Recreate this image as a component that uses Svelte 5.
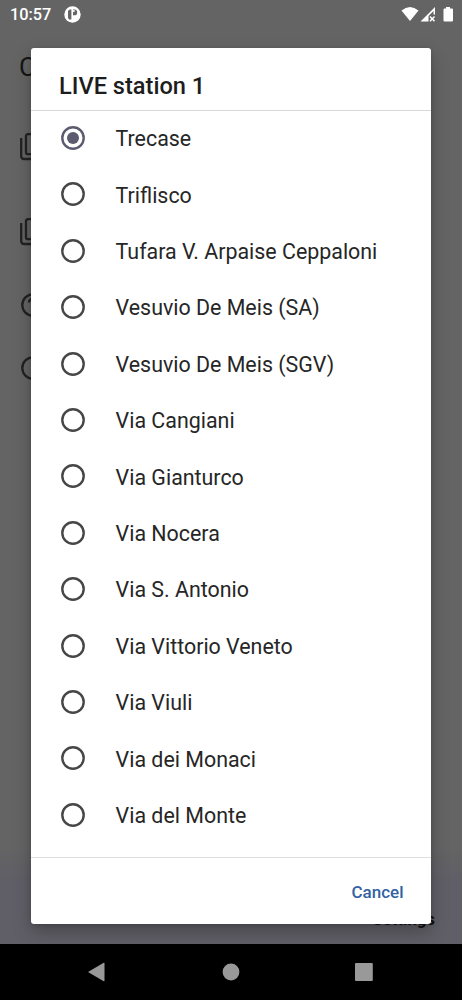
<script>
    const stations = [
        'Trecase',
        'Triflisco',
        'Tufara V. Arpaise Ceppaloni',
        'Vesuvio De Meis (SA)',
        'Vesuvio De Meis (SGV)',
        'Via Cangiani',
        'Via Gianturco',
        'Via Nocera',
        'Via S. Antonio',
        'Via Vittorio Veneto',
        'Via Viuli',
        'Via dei Monaci',
        'Via del Monte'
    ];

    let selected = $state('Trecase');
    let open = $state(true);
</script>

<div class="phone">
    <div class="screen">
        <header class="status">
            <span class="clock">10:57</span>
            <svg class="app-icon" width="17" height="17" viewBox="0 0 17 17">
                <circle cx="8.5" cy="8.5" r="8.2" fill="#fff" />
                <path d="M7.4 3.4v10.2H6.2C4.6 13.6 4 12.5 4 11V6c0-1.6.8-2.6 2.3-2.6z" fill="#646464" />
                <path d="M9 3.5h1.3a2.9 2.9 0 0 1 0 5.8H9z" fill="#646464" />
                <circle cx="9.8" cy="5" r="1" fill="#fff" />
            </svg>
            <svg class="signals" width="54" height="18" viewBox="0 0 54 18">
                <path d="M1.5 4.5Q10 -2.5 18.5 4.5L10 15z" fill="#fff" />
                <path d="M20.5 15.5L35 1v7.5h-1.5V5L28.500 10v5.5z" fill="#fff" />
                <path d="M30 10.5l4.5 4.8M34.5 10.5L30 15.3" stroke="#fff" stroke-width="1.5" />
                <path d="M46 1h4v1.5h2q1 0 1 1V14.5q0 1-1 1h-7.5q-1 0-1-1V3.5q0-1 1-1H46z" fill="#fff" />
            </svg>
        </header>

        <main class="settings">
            <h1>C</h1>
            <svg class="item copy" width="28" height="28" viewBox="0 0 28 28">
                <path d="M1.2 5v18q0 3 3 3h20M8 1.2h16q2 0 2 2v16q0 2-2 2H8q-2 0-2-2v-16q0-2 2-2z" />
            </svg>
            <svg class="item copy second" width="28" height="28" viewBox="0 0 28 28">
                <path d="M1.2 5v18q0 3 3 3h20M8 1.2h16q2 0 2 2v16q0 2-2 2H8q-2 0-2-2v-16q0-2 2-2z" />
            </svg>
            <svg class="item help" width="24" height="24" viewBox="0 0 24 24">
                <circle cx="12" cy="12" r="10.7" />
                <path d="M8 9.5Q8 6 12 6t4 3.500q0 2-4 5v2" />
            </svg>
            <svg class="item info" width="24" height="24" viewBox="0 0 24 24">
                <circle cx="12" cy="12" r="10.7" />
                <path d="M12 11v7M12 6v2" />
            </svg>
        </main>

        <nav class="tabs"><span>Settings</span></nav>
    </div>

    <footer class="navbar">
        <svg width="18" height="20" viewBox="0 0 18 20"><path d="M0 10L15.7 0.8q.8-.3.8.7v17q0 1-.8.7z" /></svg>
        <svg width="18" height="18" viewBox="0 0 18 18"><circle cx="9" cy="9" r="8.4" /></svg>
        <svg width="18" height="18" viewBox="0 0 18 18"><rect width="17.8" height="18" rx="1" /></svg>
    </footer>

    {#if open}
        <div class="dialog" role="dialog">
            <h2>LIVE station 1</h2>
            <div class="list">
                {#each stations as station}
                    <label>
                        <input type="radio" name="station" value={station} bind:group={selected} />
                        <svg class="radio" width="24" height="24" viewBox="0 0 24 24">
                            <circle class="ring" cx="12" cy="12" r="10.7" />
                            {#if selected === station}
                                <circle class="dot" cx="12" cy="12" r="6" />
                            {/if}
                        </svg>
                        <span class="name">{station}</span>
                    </label>
                {/each}
            </div>
            <div class="actions">
                <button onclick={() => (open = false)}>Cancel</button>
            </div>
        </div>
    {/if}
</div>

<style>
    .phone {
        position: relative;
        display: flex;
        flex-direction: column;
        width: 462px;
        height: 1000px;
        overflow: hidden;
        font-family: Roboto, sans-serif;
        background: #000;
    }

    .screen {
        display: flex;
        flex-direction: column;
        height: 943.5px;
        background: #646464;
    }

    .status {
        display: flex;
        align-items: center;
        height: 30px;
        padding: 0 8px 0 10px;
        color: #fff;
    }

    .clock {
        font-size: 16.3px;
        font-weight: 500;
        line-height: 30px;
    }

    .app-icon {
        margin: -1px 0 0 13px;
    }

    .signals {
        margin-left: auto;
    }

    .settings {
        display: flex;
        flex-direction: column;
        flex: 1;
        padding-left: 20px;
    }

    h1 {
        margin: 20px 0 0 -1px;
        font-size: 26px;
        font-weight: 400;
        line-height: 34px;
        color: #151515;
    }

    .item {
        fill: none;
        stroke: #222;
        stroke-width: 2.3;
    }

    .copy {
        margin-top: 49px;
    }

    .second {
        margin-top: 57px;
    }

    .help {
        margin: 47px 0 0 1px;
    }

    .info {
        margin: 39px 0 0 1px;
    }

    .tabs {
        display: flex;
        justify-content: flex-end;
        align-items: flex-end;
        height: 93px;
        padding: 0 27px 15px 0;
        box-sizing: border-box;
        background: linear-gradient(#636364, #605f67 30%);
        font-size: 16.8px;
        font-weight: 700;
        color: #111;
    }

    .navbar {
        display: flex;
        align-items: center;
        justify-content: space-between;
        flex: 1;
        padding: 0 89px 0 88px;
        fill: #999;
    }

    .dialog {
        position: absolute;
        top: 47.5px;
        left: 31px;
        display: flex;
        flex-direction: column;
        width: 400px;
        height: 876.5px;
        border-radius: 3px;
        background: #fff;
        box-shadow: 0 8px 18px rgba(0, 0, 0, 0.25), 0 1px 4px rgba(0, 0, 0, 0.15);
    }

    h2 {
        height: 63.5px;
        margin: 0;
        padding: 7px 28px 0;
        box-sizing: border-box;
        border-bottom: 1px solid #d8d8d8;
        font-size: 23.6px;
        font-weight: 500;
        line-height: 62px;
        color: #1d1d1d;
    }

    .list {
        flex: 1;
        min-height: 0;
        overflow: hidden;
    }

    label {
        display: flex;
        align-items: center;
        height: 56.4px;
        padding-left: 30px;
        cursor: pointer;
    }

    label:first-child {
        margin-top: -1.2px;
    }

    input {
        position: absolute;
        opacity: 0;
    }

    .ring {
        fill: none;
        stroke: #474747;
        stroke-width: 2.4;
    }

    input:checked + .radio .ring {
        stroke: #5c5b70;
    }

    .dot {
        fill: #5c5b70;
    }

    .name {
        margin: 2.4px 0 0 30.6px;
        font-size: 21.4px;
        line-height: 28px;
        color: #262626;
    }

    .actions {
        display: flex;
        align-items: center;
        justify-content: flex-end;
        height: 67px;
        padding: 2px 27.5px 0 0;
        box-sizing: border-box;
        border-top: 1px solid #dedede;
    }

    button {
        padding: 0;
        border: none;
        background: none;
        font-family: inherit;
        font-size: 17px;
        font-weight: 500;
        color: #3362a3;
        cursor: pointer;
    }
</style>
